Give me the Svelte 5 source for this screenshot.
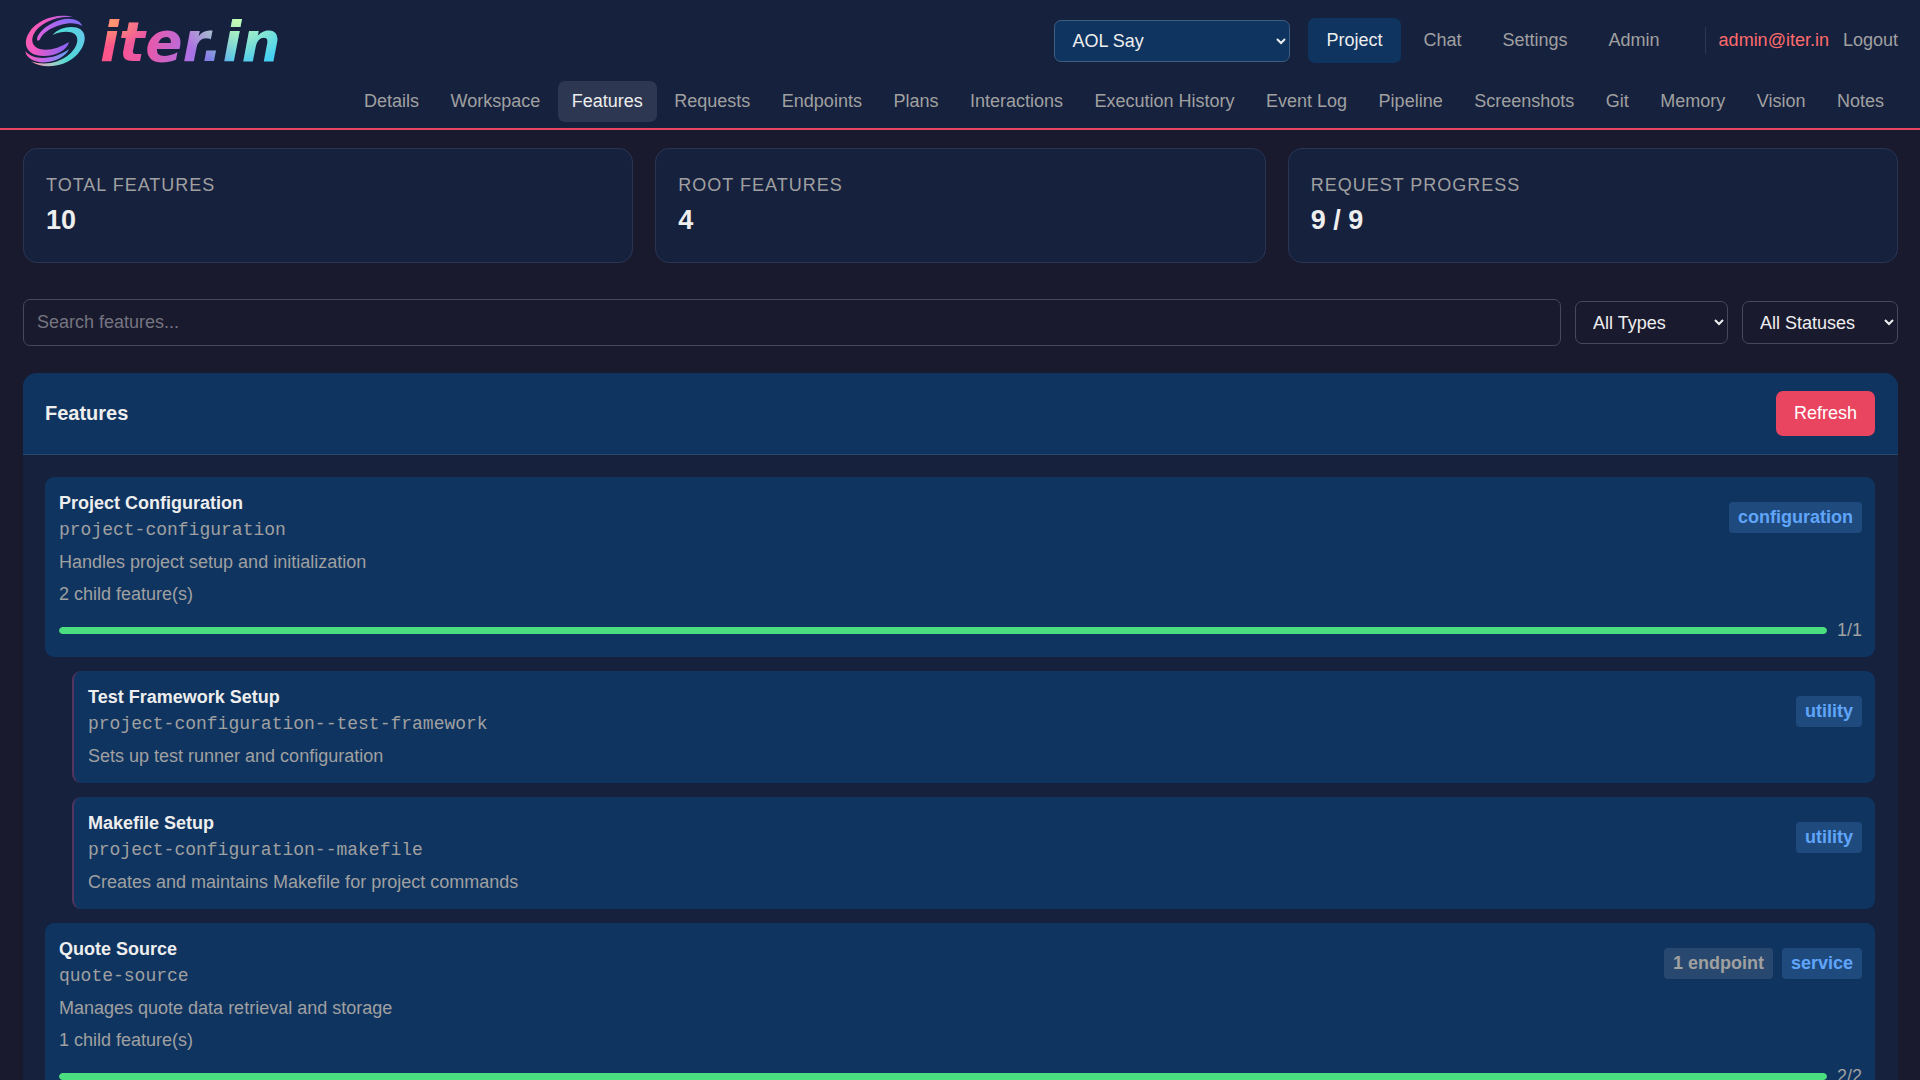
<script lang="ts">
	interface Feature {
		name: string;
		slug: string;
		description: string;
		type: string;
		endpoints?: number;
		done?: number;
		total?: number;
		children?: Feature[];
	}

	const mainLinks = ['Project', 'Chat', 'Settings', 'Admin'];
	const subLinks = [
		'Details',
		'Workspace',
		'Features',
		'Requests',
		'Endpoints',
		'Plans',
		'Interactions',
		'Execution History',
		'Event Log',
		'Pipeline',
		'Screenshots',
		'Git',
		'Memory',
		'Vision',
		'Notes'
	];

	const stats = [
		{ label: 'Total Features', value: '10' },
		{ label: 'Root Features', value: '4' },
		{ label: 'Request Progress', value: '9 / 9' }
	];

	const features: Feature[] = [
		{
			name: 'Project Configuration',
			slug: 'project-configuration',
			description: 'Handles project setup and initialization',
			type: 'configuration',
			done: 1,
			total: 1,
			children: [
				{
					name: 'Test Framework Setup',
					slug: 'project-configuration--test-framework',
					description: 'Sets up test runner and configuration',
					type: 'utility'
				},
				{
					name: 'Makefile Setup',
					slug: 'project-configuration--makefile',
					description: 'Creates and maintains Makefile for project commands',
					type: 'utility'
				}
			]
		},
		{
			name: 'Quote Source',
			slug: 'quote-source',
			description: 'Manages quote data retrieval and storage',
			type: 'service',
			endpoints: 1,
			done: 2,
			total: 2,
			children: []
		}
	];

	const childCounts: Record<string, number> = {
		'project-configuration': 2,
		'quote-source': 1
	};

	let search = $state('');

	function matches(feature: Feature): boolean {
		return (feature.name + ' ' + feature.slug).toLowerCase().includes(search.toLowerCase());
	}

	const visible = $derived(
		features.filter((f) => matches(f) || (f.children ?? []).some(matches))
	);
</script>

{#snippet card(feature: Feature, nested: boolean)}
	<article class="feature" class:nested>
		<div class="feature-head">
			<div>
				<h3>{feature.name}</h3>
				<div class="slug">{feature.slug}</div>
			</div>
			<div class="badges">
				{#if feature.endpoints}
					<span class="badge muted">{feature.endpoints} endpoint</span>
				{/if}
				<span class="badge">{feature.type}</span>
			</div>
		</div>
		<p>{feature.description}</p>
		{#if childCounts[feature.slug]}
			<p>{childCounts[feature.slug]} child feature(s)</p>
		{/if}
		{#if feature.total}
			<div class="progress">
				<div class="track">
					<div class="fill" style="width: {((feature.done ?? 0) / feature.total) * 100}%"></div>
				</div>
				<span>{feature.done}/{feature.total}</span>
			</div>
		{/if}
	</article>
{/snippet}

<div class="page">
	<header>
		<div class="top-row">
			<a class="logo" href="#home" aria-label="iter.in">
				<svg viewBox="75 45 183 159" aria-hidden="true">
					<defs>
						<linearGradient id="outer" x1="0" y1="0" x2="1" y2="0.3">
							<stop offset="0" stop-color="#ff5fa2" />
							<stop offset="0.4" stop-color="#f058c4" />
							<stop offset="1" stop-color="#8a63f5" />
						</linearGradient>
						<linearGradient id="inner" x1="0" y1="1" x2="1" y2="0">
							<stop offset="0" stop-color="#e660d8" />
							<stop offset="0.5" stop-color="#b565ee" />
							<stop offset="1" stop-color="#7470f6" />
						</linearGradient>
						<linearGradient id="right" x1="0" y1="0.5" x2="1" y2="0.3">
							<stop offset="0" stop-color="#f29ab5" />
							<stop offset="0.3" stop-color="#9fd0c8" />
							<stop offset="0.6" stop-color="#4edbd4" />
							<stop offset="1" stop-color="#62cbe8" />
						</linearGradient>
						<linearGradient id="lower" x1="0" y1="0" x2="1" y2="0">
							<stop offset="0" stop-color="#ff58b4" />
							<stop offset="0.5" stop-color="#b56cf0" />
							<stop offset="1" stop-color="#5ca5ee" />
						</linearGradient>
					</defs>
					<path fill="url(#outer)" d="M220 52C172 38 112 58 87 98C65 134 82 168 132 168C168 168 202 150 207 126C183 141 160 149 137 149C103 149 88 127 102 101C118 72 165 47 220 52Z" />
					<path fill="url(#inner)" d="M112 121C107 103 142 71 180 60C215 51 242 61 246 78C231 68 207 67 181 75C149 84 127 101 120 118C118 122 113 123 112 121Z" />
					<path fill="url(#right)" d="M158 105C176 82 220 74 241 88C263 103 257 139 226 169C192 202 127 209 93 184C130 198 177 190 208 163C232 142 239 114 224 102C210 92 182 94 158 105Z" />
					<path fill="url(#lower)" d="M76 153C100 184 164 179 208 147C198 166 172 185 137 187C105 189 78 175 76 153Z" />
				</svg>
				<span>iter.in</span>
			</a>
			<div class="top-right">
				<select class="project-select" aria-label="Project">
					<option>AOL Say</option>
				</select>
				<nav class="main-nav" aria-label="Main">
					{#each mainLinks as link}
						<a href="#{link.toLowerCase()}" class:active={link === 'Project'}>{link}</a>
					{/each}
				</nav>
				<div class="user">
					<span class="email">admin@iter.in</span>
					<a href="#logout">Logout</a>
				</div>
			</div>
		</div>
		<nav class="sub-nav" aria-label="Project sections">
			{#each subLinks as link}
				<a href="#{link.toLowerCase().replace(' ', '-')}" class:active={link === 'Features'}>{link}</a>
			{/each}
		</nav>
	</header>

	<main>
		<section class="stats">
			{#each stats as stat}
				<div class="stat">
					<div class="stat-label">{stat.label}</div>
					<div class="stat-value">{stat.value}</div>
				</div>
			{/each}
		</section>

		<div class="filters">
			<input type="text" placeholder="Search features..." aria-label="Search features" bind:value={search} />
			<select class="type-select" aria-label="Type">
				<option>All Types</option>
				<option>configuration</option>
				<option>utility</option>
				<option>service</option>
			</select>
			<select class="status-select" aria-label="Status">
				<option>All Statuses</option>
			</select>
		</div>

		<section class="panel">
			<div class="panel-head">
				<h2>Features</h2>
				<button type="button" onclick={() => (search = '')}>Refresh</button>
			</div>
			<div class="feature-list">
				{#each visible as feature}
					{@render card(feature, false)}
					{#each feature.children ?? [] as child}
						{@render card(child, true)}
					{/each}
				{/each}
			</div>
		</section>
	</main>
</div>

<style>
	:global(body) {
		background: #1a1a2e;
		overflow: hidden;
	}
	.page {
		--surface: #16213e;
		--raised: #0f3460;
		--accent: #e94560;
		--text: #eee;
		--muted: #a0a0a0;
		height: 100vh;
		overflow: hidden;
		color: var(--text);
		font-family: 'Liberation Sans', Arial, sans-serif;
		font-size: 18px;
		line-height: 27px;
	}
	.page * {
		box-sizing: border-box;
	}
	a {
		color: var(--muted);
		text-decoration: none;
	}
	h2,
	h3,
	p {
		margin: 0;
	}
	select,
	input,
	button {
		font: inherit;
		color: var(--text);
	}

	header {
		background: var(--surface);
		border-bottom: 2px solid var(--accent);
		padding: 0 22px 6px;
	}
	.top-row {
		display: flex;
		align-items: center;
		justify-content: space-between;
		height: 81px;
	}
	.logo {
		display: flex;
		align-items: center;
		gap: 14px;
		padding: 2px 0 0 3px;
	}
	.logo svg {
		width: 61px;
		height: 53px;
	}
	.logo span {
		font: italic bold 55px/60px 'DejaVu Sans', sans-serif;
		color: transparent;
		background:
			radial-gradient(ellipse 40px 24px at 6% 18%, #ff9a6e, transparent),
			radial-gradient(ellipse 60px 44px at 76% 14%, #c8ffb0, transparent),
			linear-gradient(100deg, #ff5588 5%, #e858a8 28%, #b070e4 50%, #8080e8 62%, #4cc8f0 74%, #45d4f5);
		-webkit-background-clip: text;
		background-clip: text;
	}
	.top-right {
		display: flex;
		align-items: center;
		gap: 18px;
	}
	select {
		height: 43px;
		padding: 0 0 0 13px;
		border: 1px solid #48485a;
		border-radius: 7px;
		background: #1a1a2e;
	}
	.project-select {
		width: 236px;
		height: 42px;
		background: var(--raised);
		border-color: #3f5d80;
	}
	.type-select {
		width: 153px;
	}
	.status-select {
		width: 156px;
	}
	.main-nav {
		display: flex;
		gap: 5px;
	}
	.main-nav a {
		padding: 9px 18px;
		border-radius: 7px;
	}
	.main-nav a.active {
		background: var(--raised);
		color: var(--text);
	}
	.user {
		display: flex;
		gap: 14px;
		margin-left: 9px;
		padding-left: 13px;
		border-left: 1px solid #2d3752;
	}
	.email {
		color: #ff6b6b;
	}
	.sub-nav {
		display: flex;
		justify-content: space-between;
		max-width: 1548px;
		margin-left: auto;
	}
	.sub-nav a {
		padding: 7px 14px;
		border-radius: 7px;
	}
	.sub-nav a.active {
		background: #2d3751;
		color: var(--text);
	}

	main {
		padding: 18px 22px 22px 23px;
	}
	.stats {
		display: grid;
		grid-template-columns: repeat(3, 1fr);
		gap: 22px;
		margin-bottom: 36px;
	}
	.stat {
		padding: 23px 22px 21px;
		background: var(--surface);
		border: 1px solid #2a3553;
		border-radius: 14px;
	}
	.stat-label {
		color: var(--muted);
		text-transform: uppercase;
		letter-spacing: 1px;
	}
	.stat-value {
		font-size: 27px;
		font-weight: bold;
		line-height: 42px;
	}

	.filters {
		display: flex;
		align-items: center;
		gap: 14px;
		margin-bottom: 27px;
	}
	.filters input {
		flex: 1;
		min-width: 0;
		height: 47px;
		padding: 0 13px;
		background: transparent;
		border: 1px solid #48485a;
		border-radius: 7px;
	}
	.filters input::placeholder {
		color: #757580;
	}

	.panel {
		background: var(--surface);
		border-radius: 14px;
		overflow: hidden;
	}
	.panel-head {
		display: flex;
		align-items: center;
		justify-content: space-between;
		padding: 18px 23px 18px 22px;
		background: var(--raised);
		border-bottom: 1px solid #27486f;
	}
	h2 {
		font-size: 20px;
	}
	button {
		padding: 9px 18px;
		border: 0;
		border-radius: 7px;
		background: var(--accent);
		color: #fff;
		cursor: pointer;
	}
	.feature-list {
		display: flex;
		flex-direction: column;
		gap: 14px;
		padding: 22px 23px 22px 22px;
	}
	.feature {
		padding: 13px 13px 13px 14px;
		background: var(--raised);
		border-radius: 9px;
		color: var(--muted);
	}
	.feature.nested {
		margin-left: 27px;
		border-left: 2px solid #533560;
	}
	.feature-head {
		display: flex;
		align-items: center;
		justify-content: space-between;
	}
	h3 {
		font-size: 18px;
		color: var(--text);
	}
	.slug {
		font-family: 'Liberation Mono', monospace;
	}
	.feature p {
		margin-top: 5px;
	}
	.badges {
		display: flex;
		gap: 9px;
	}
	.badge {
		padding: 2px 9px;
		border-radius: 4px;
		background: #1f4a7d;
		color: #60a5fa;
		font-weight: bold;
	}
	.badge.muted {
		background: #28486f;
		color: var(--muted);
	}
	.progress {
		display: flex;
		align-items: center;
		gap: 10px;
		margin-top: 9px;
	}
	.track {
		flex: 1;
		height: 7px;
		border-radius: 4px;
		background: var(--surface);
		overflow: hidden;
	}
	.fill {
		height: 100%;
		border-radius: 4px;
		background: #4ade80;
	}
</style>
